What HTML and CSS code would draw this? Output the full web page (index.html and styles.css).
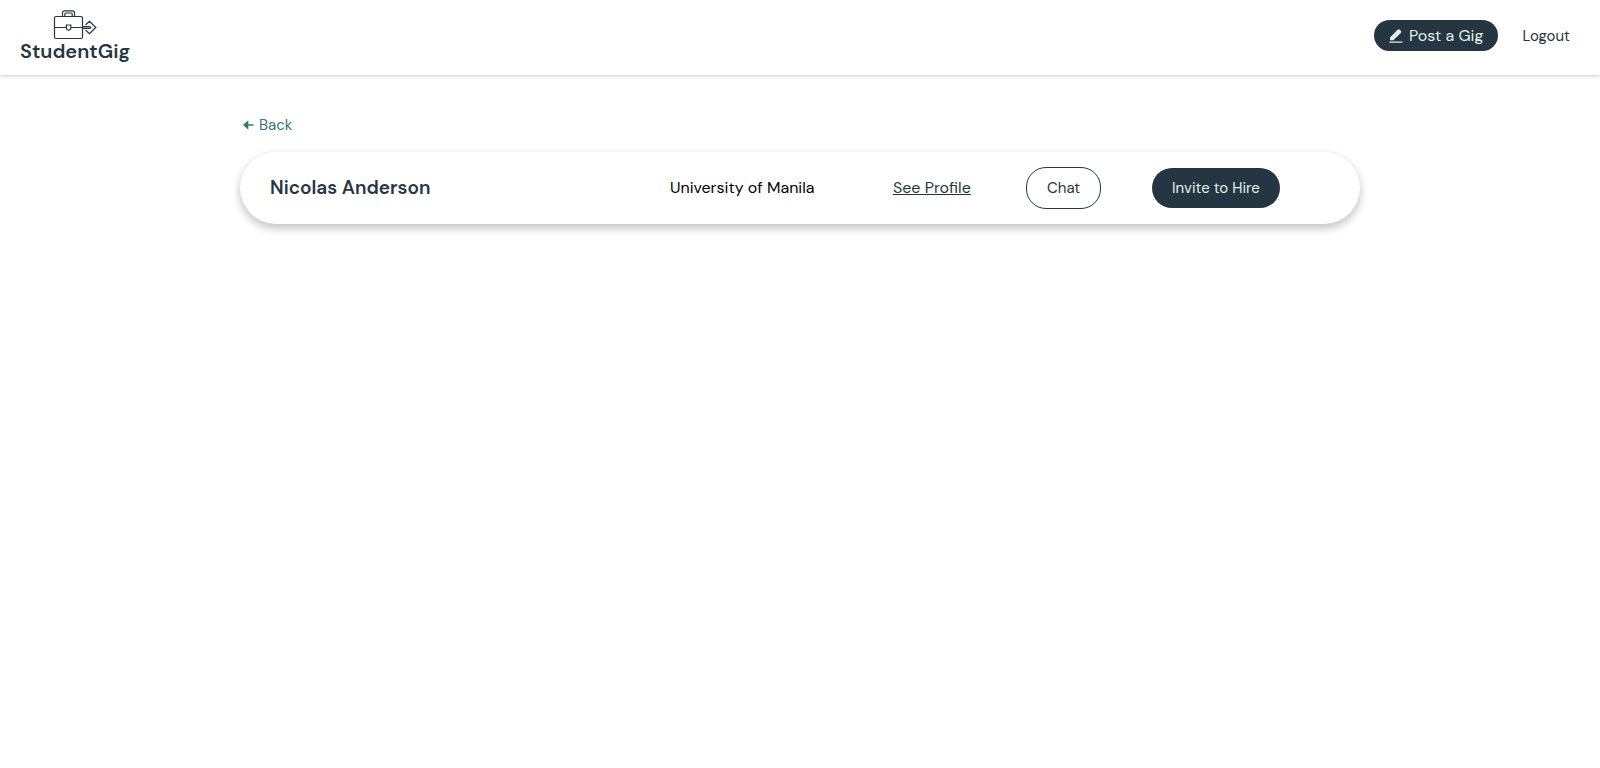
FILE: index.html
```html
<!DOCTYPE html>
<html lang="en">
<head>
<meta charset="utf-8">
<meta name="viewport" content="width=device-width, initial-scale=1">
<title>StudentGig</title>
<link rel="stylesheet" href="styles.css">
</head>
<body>
<header class="site-header">
  <a class="logo" href="#">
    <svg class="logo-mark" width="44" height="30" viewBox="0 0 44 30" fill="none" stroke="currentColor" stroke-width="1.2" aria-hidden="true">
      <rect x="1.5" y="6.5" width="28" height="22" rx="1.5"/>
      <path d="M9.5 6V3Q9.5 .8 11.5.8H19.5Q21.5.8 21.5 3V6M11.8 6V4Q11.8 3 12.8 3H18.2Q19.2 3 19.2 4V6M1.5 17.5H13.5M17.8 17.5H29.5M13.4 15H17.8V18.2Q17.8 19.8 15.6 20.2Q13.4 19.8 13.4 18.2Z"/>
      <path d="M29.5 16.6H36Q37.8 16.6 37.8 17.5T36 18.4H29.5M32.5 15L36.5 11.4 42.8 17.5 36.5 23.6 32.5 20"/>
    </svg>
    <span class="logo-text">StudentGig</span>
  </a>
  <nav class="site-nav">
    <a class="post-gig" href="#">
      <svg width="14" height="14" viewBox="0 0 14 14" fill="currentColor" aria-hidden="true"><path d="M.5 12.6H13.5V13.8H.5ZM1 11.3V8.4L8.6.8Q9.6 0 10.5.6L12 2Q12.7 2.9 12 3.7L4.3 11.3Z"/></svg>
      <span>Post a Gig</span>
    </a>
    <a class="logout" href="#">Logout</a>
  </nav>
</header>
<main class="page">
  <a class="back" href="#">
    <svg width="11" height="10" viewBox="0 0 11 10" fill="currentColor" aria-hidden="true"><path d="M0 5L5.3 .3V4.3H10.5V5.7H5.3V9.7Z"/></svg>
    <span>Back</span>
  </a>
  <article class="applicant">
    <h2 class="applicant-name">Nicolas Anderson</h2>
    <span class="school">University of Manila</span>
    <a class="profile-link" href="#">See Profile</a>
    <button class="btn btn-outline" type="button">Chat</button>
    <button class="btn btn-solid" type="button">Invite to Hire</button>
  </article>
</main>
</body>
</html>
```
FILE: styles.css
```css
* { box-sizing: border-box; }

body {
  margin: 0;
  background: #fff;
  color: #000;
  font-family: "DM Sans", Inter, sans-serif;
  font-size: 16px;
  line-height: 20px;
}

a { color: #243642; text-decoration: none; }

.site-header {
  display: flex;
  align-items: flex-start;
  justify-content: space-between;
  padding: 10px 30px 12px 20px;
  box-shadow: 0 1px 4px rgba(0, 0, 0, 0.2);
}

.logo {
  display: flex;
  flex-direction: column;
  align-items: center;
}

.logo-text {
  font-size: 20px;
  font-weight: 600;
  line-height: 23px;
}

.site-nav {
  display: flex;
  align-items: center;
  gap: 24px;
  padding-top: 10px;
}

.post-gig {
  display: flex;
  align-items: center;
  gap: 6px;
  padding: 6px 15px 5px;
  border-radius: 20px;
  background: #243642;
  color: #e2f1e7;
}

.logout { font-size: 15px; }

.page {
  width: 70%;
  margin: 0 auto;
  padding: 40px 0;
}

.back {
  display: inline-flex;
  align-items: center;
  gap: 5px;
  padding-left: 3px;
  color: #387478;
  font-size: 15px;
}

.applicant {
  display: grid;
  grid-template-columns: 400fr 223fr 133fr 126fr 178fr;
  align-items: center;
  justify-items: start;
  margin-top: 17px;
  padding: 15px 30px;
  border-radius: 40px;
  background: #fff;
  box-shadow: 0 4px 10px rgba(0, 0, 0, 0.25);
}

.applicant-name {
  margin: 0;
  color: #243642;
  font-size: 19px;
  font-weight: 600;
}

.profile-link { text-decoration: underline; }

.btn {
  padding: 10px 20px;
  border: 0;
  border-radius: 20px;
  font: inherit;
  font-size: 15px;
  cursor: pointer;
}

.btn-outline {
  border: 1px solid #243642;
  background: #fff;
  color: #243642;
}

.btn-solid {
  background: #243642;
  color: #e2f1e7;
}
```
